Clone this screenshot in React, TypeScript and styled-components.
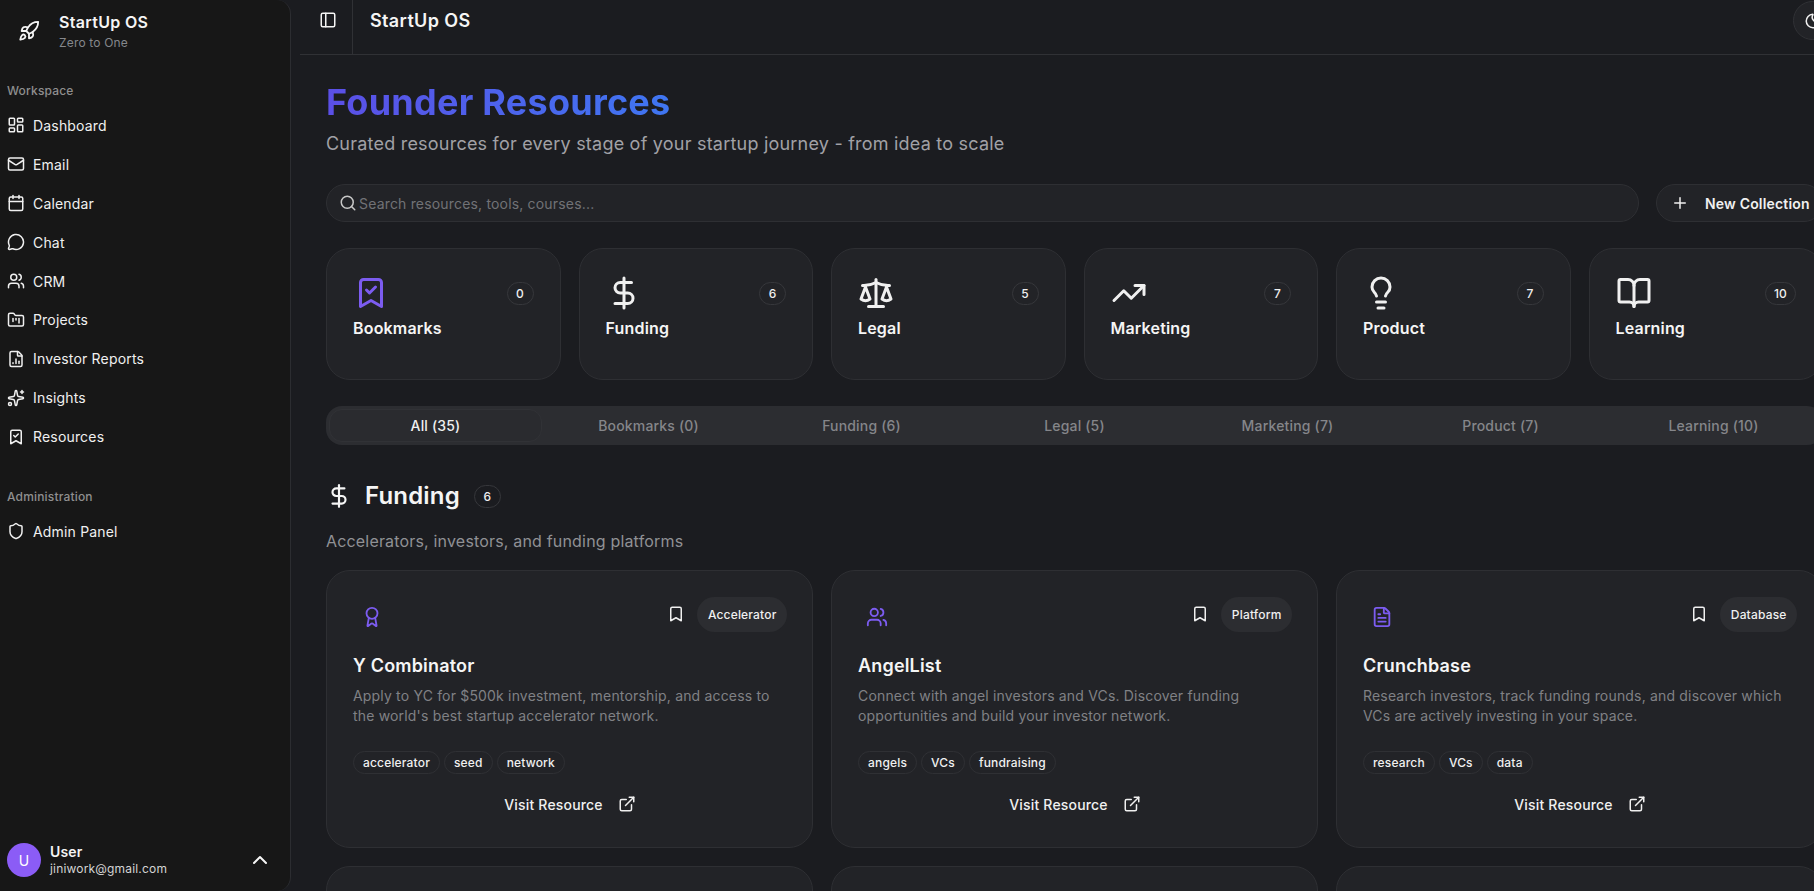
import React from "react";
import styled, { createGlobalStyle } from "styled-components";
import {
  Rocket, LayoutDashboard, Mail, Calendar, MessageCircle, Users, FolderKanban, FileChartColumn,
  Sparkles, BookmarkCheck, Shield, ChevronUp, PanelLeft, Moon, Search, Plus, DollarSign, Scale,
  TrendingUp, Lightbulb, BookOpen, Award, FileText, Bookmark, ExternalLink,
} from "lucide-react";

const Global = createGlobalStyle`
  html, body { margin: 0; padding: 0; height: 100%; overflow: hidden; background: #1b1c20; }
  body { font-family: Inter, "Liberation Sans", sans-serif; color: #f5f5f5; letter-spacing: 0.011em; }
  #root { height: 100%; }
  * { box-sizing: border-box; }
  button { letter-spacing: inherit; }
`;

const Shell = styled.div`
  display: flex;
  width: 1814px;
  height: 891px;
  overflow: hidden;
  background: #1b1c20;
`;

const Sidebar = styled.aside`
  flex: 0 0 291px;
  height: 891px;
  display: flex;
  flex-direction: column;
  background: #171717;
  border-right: 1px solid #2c2d31;
  border-radius: 0 14px 14px 0;
  padding: 0 7px;
`;

const Brand = styled.div`
  display: flex;
  align-items: center;
  height: 62px;
  gap: 19px;
  padding-left: 11px;
  flex: none;
`;

const BrandText = styled.div`
  display: flex;
  flex-direction: column;
`;

const BrandName = styled.div`
  font-size: 16px;
  line-height: 22px;
  font-weight: 600;
  letter-spacing: 0.02em;
`;

const BrandSub = styled.div`
  font-size: 12px;
  line-height: 16px;
  color: #85878c;
  margin-top: 2px;
`;

const GroupLabel = styled.div<{ $top: number }>`
  font-size: 12px;
  line-height: 16px;
  font-weight: 500;
  color: #8f8f8f;
  margin-top: ${(p) => p.$top}px;
  margin-bottom: 7px;
`;

const NavList = styled.nav`
  display: flex;
  flex-direction: column;
`;

const NavRow = styled.a`
  display: flex;
  align-items: center;
  gap: 8px;
  height: 38.9px;
  font-size: 14px;
  color: #f0f0f0;
  svg { flex: none; }
`;

const Footer = styled.div`
  margin-top: auto;
  height: 48px;
  margin-bottom: 7px;
  display: flex;
  align-items: center;
  gap: 9px;
`;

const Avatar = styled.div`
  width: 34px;
  height: 34px;
  border-radius: 50%;
  background: #8b5cf6;
  display: flex;
  align-items: center;
  justify-content: center;
  font-size: 14px;
  color: #fff;
`;

const UserText = styled.div`
  flex: 1;
  display: flex;
  flex-direction: column;
`;

const UserName = styled.div`
  font-size: 14px;
  line-height: 18px;
  font-weight: 600;
`;

const UserMail = styled.div`
  font-size: 12px;
  line-height: 16px;
  color: #d4d4d4;
`;

const ChevronSlot = styled.div`
  display: flex;
  margin-right: 11px;
`;

const Main = styled.main`
  flex: 0 0 1560px;
  margin-left: 9px;
  display: flex;
  flex-direction: column;
`;

const Header = styled.header`
  flex: none;
  height: 55px;
  display: flex;
  align-items: flex-start;
  border-bottom: 1px solid #303135;
  position: relative;
`;

const ToggleCell = styled.div`
  width: 53px;
  height: 54px;
  display: flex;
  justify-content: flex-start;
  padding: 11px 0 0 19px;
  border-right: 1px solid #303135;
`;

const HeaderTitle = styled.div`
  font-size: 18px;
  line-height: 42px;
  font-weight: 600;
  margin-left: 17px;
  letter-spacing: 0.02em;
`;

const ThemeButton = styled.button`
  position: absolute;
  left: 1493px;
  top: 1px;
  width: 39px;
  height: 39px;
  border-radius: 50%;
  border: 1px solid #303135;
  background: #222327;
  color: #f0f0f0;
  display: flex;
  align-items: center;
  justify-content: center;
  padding: 0;
`;

const Content = styled.div`
  width: 1497px;
  margin-left: 26px;
  display: flex;
  flex-direction: column;
`;

const Title = styled.h1`
  margin: 27px 0 0;
  font-size: 36px;
  line-height: 40px;
  font-weight: 700;
  letter-spacing: 0.007em;
  width: max-content;
  background: linear-gradient(90deg, #5b4fe6, #3f76f2);
  -webkit-background-clip: text;
  background-clip: text;
  color: transparent;
`;

const Subtitle = styled.p`
  margin: 8px 0 0;
  font-size: 18px;
  line-height: 28px;
  letter-spacing: 0.012em;
  color: #a1a1a6;
`;

const SearchRow = styled.div`
  display: flex;
  gap: 17px;
  margin-top: 26px;
`;

const SearchBox = styled.div`
  flex: 1;
  height: 38px;
  display: flex;
  align-items: center;
  gap: 2px;
  padding-left: 12px;
  background: #222327;
  border: 1px solid #2e2f33;
  border-radius: 19px;
  color: #c8c8c8;
`;

const Placeholder = styled.span`
  font-size: 14px;
  color: #717276;
`;

const NewButton = styled.button`
  flex: none;
  width: 167px;
  height: 38px;
  display: flex;
  align-items: center;
  gap: 16px;
  padding: 0 0 0 14px;
  background: #222327;
  border: 1px solid #2e2f33;
  border-radius: 19px;
  color: #f0f0f0;
  font: 600 14px Inter, sans-serif;
`;

const StatGrid = styled.div`
  display: grid;
  grid-template-columns: repeat(6, 1fr);
  gap: 18px;
  margin-top: 26px;
`;

const StatCard = styled.div`
  height: 132px;
  padding: 26px 26px 0;
  background: #222327;
  border: 1px solid #2e2f33;
  border-radius: 24px;
`;

const StatTop = styled.div<{ $accent?: boolean }>`
  display: flex;
  align-items: center;
  justify-content: space-between;
  color: ${(p) => (p.$accent ? "#7c5cf0" : "#f0f0f0")};
`;

const CountBadge = styled.span`
  min-width: 27px;
  height: 23px;
  padding: 0 8px;
  display: inline-flex;
  align-items: center;
  justify-content: center;
  border: 1px solid #36373b;
  border-radius: 12px;
  background: transparent;
  color: #f0f0f0;
  font-size: 12px;
  font-weight: 500;
`;

const StatName = styled.div`
  margin-top: 5px;
  font-size: 16px;
  line-height: 24px;
  font-weight: 600;
`;

const Tabs = styled.div`
  display: grid;
  grid-template-columns: repeat(7, 1fr);
  height: 39px;
  margin-top: 26px;
  padding: 3px;
  background: #2c2d31;
  border-radius: 16px;
`;

const Tab = styled.div<{ $active?: boolean }>`
  display: flex;
  align-items: center;
  justify-content: center;
  font-size: 14px;
  font-weight: 500;
  border-radius: 13px;
  color: ${(p) => (p.$active ? "#f0f0f0" : "#85868a")};
  background: ${(p) => (p.$active ? "#2a2b2f" : "transparent")};
  border: 1px solid ${(p) => (p.$active ? "#313236" : "transparent")};
`;

const SectionHead = styled.div`
  display: flex;
  align-items: center;
  margin-top: 35px;
  height: 32px;
`;

const SectionIcon = styled.span`
  display: flex;
  margin-right: 13px;
`;

const SectionTitle = styled.h2`
  margin: 0 14px 0 0;
  font-size: 24px;
  line-height: 32px;
  font-weight: 600;
`;

const SectionDesc = styled.p`
  margin: 17px 0 0;
  font-size: 16px;
  line-height: 24px;
  color: #909195;
`;

const CardGrid = styled.div`
  display: grid;
  grid-template-columns: repeat(3, 1fr);
  gap: 18px;
  margin-top: 17px;
`;

const Card = styled.article`
  height: 278px;
  padding: 26px 25px 0 26px;
  background: #222327;
  border: 1px solid #2e2f33;
  border-radius: 24px;
  display: flex;
  flex-direction: column;
`;

const CardTop = styled.div`
  display: flex;
  align-items: flex-start;
  height: 38px;
`;

const CardIcon = styled.div`
  width: 38px;
  height: 38px;
  margin-top: 1px;
  display: flex;
  align-items: center;
  justify-content: center;
  color: #7c5cf0;
`;

const MarkSlot = styled.span`
  display: flex;
  margin: 8px 12px 0 auto;
  color: #f0f0f0;
`;

const CategoryPill = styled.span`
  height: 35px;
  padding: 0 10.5px;
  display: flex;
  align-items: center;
  border-radius: 18px;
  background: #2c2d31;
  font-size: 12px;
  font-weight: 500;
  color: #f0f0f0;
`;

const CardTitle = styled.h3`
  margin: 17px 0 0;
  font-size: 18px;
  line-height: 28px;
  font-weight: 600;
`;

const CardDesc = styled.p`
  margin: 6px 0 0;
  font-size: 14px;
  line-height: 20px;
  color: #808185;
`;

const TagRow = styled.div`
  display: flex;
  gap: 4px;
  margin-top: 25px;
`;

const Tag = styled.span`
  height: 23px;
  padding: 0 9px;
  display: flex;
  align-items: center;
  border: 1px solid #2f3034;
  border-radius: 12px;
  font-size: 12px;
  font-weight: 500;
  color: #f0f0f0;
`;

const VisitLink = styled.a`
  margin-top: 18px;
  display: flex;
  align-items: center;
  justify-content: center;
  gap: 15px;
  height: 24px;
  font-size: 14px;
  font-weight: 500;
  color: #f0f0f0;
`;

const nav = [
  { label: "Dashboard", Icon: LayoutDashboard },
  { label: "Email", Icon: Mail },
  { label: "Calendar", Icon: Calendar },
  { label: "Chat", Icon: MessageCircle },
  { label: "CRM", Icon: Users },
  { label: "Projects", Icon: FolderKanban },
  { label: "Investor Reports", Icon: FileChartColumn },
  { label: "Insights", Icon: Sparkles },
  { label: "Resources", Icon: BookmarkCheck },
];

const stats = [
  { label: "Bookmarks", count: 0, Icon: BookmarkCheck, accent: true },
  { label: "Funding", count: 6, Icon: DollarSign },
  { label: "Legal", count: 5, Icon: Scale },
  { label: "Marketing", count: 7, Icon: TrendingUp },
  { label: "Product", count: 7, Icon: Lightbulb },
  { label: "Learning", count: 10, Icon: BookOpen },
];

const tabs = ["All (35)", "Bookmarks (0)", "Funding (6)", "Legal (5)", "Marketing (7)", "Product (7)", "Learning (10)"];

const cards = [
  {
    title: "Y Combinator", cat: "Accelerator", Icon: Award,
    desc: "Apply to YC for $500k investment, mentorship, and access to the world's best startup accelerator network.",
    tags: ["accelerator", "seed", "network"],
  },
  {
    title: "AngelList", cat: "Platform", Icon: Users,
    desc: "Connect with angel investors and VCs. Discover funding opportunities and build your investor network.",
    tags: ["angels", "VCs", "fundraising"],
  },
  {
    title: "Crunchbase", cat: "Database", Icon: FileText,
    desc: "Research investors, track funding rounds, and discover which VCs are actively investing in your space.",
    tags: ["research", "VCs", "data"],
  },
];

export default function App() {
  return (
    <Shell>
      <Global />
      <Sidebar>
        <Brand>
          <Rocket size={22} />
          <BrandText>
            <BrandName>StartUp OS</BrandName>
            <BrandSub>Zero to One</BrandSub>
          </BrandText>
        </Brand>
        <GroupLabel $top={21}>Workspace</GroupLabel>
        <NavList>
          {nav.map(({ label, Icon }) => (
            <NavRow key={label}>
              <Icon size={18} />
              {label}
            </NavRow>
          ))}
        </NavList>
        <GroupLabel $top={33}>Administration</GroupLabel>
        <NavList>
          <NavRow>
            <Shield size={18} />
            Admin Panel
          </NavRow>
        </NavList>
        <Footer>
          <Avatar>U</Avatar>
          <UserText>
            <UserName>User</UserName>
            <UserMail>jiniwork@gmail.com</UserMail>
          </UserText>
          <ChevronSlot>
            <ChevronUp size={24} />
          </ChevronSlot>
        </Footer>
      </Sidebar>
      <Main>
        <Header>
          <ToggleCell>
            <PanelLeft size={18} />
          </ToggleCell>
          <HeaderTitle>StartUp OS</HeaderTitle>
          <ThemeButton>
            <Moon size={18} />
          </ThemeButton>
        </Header>
        <Content>
          <Title>Founder Resources</Title>
          <Subtitle>Curated resources for every stage of your startup journey - from idea to scale</Subtitle>
          <SearchRow>
            <SearchBox>
              <Search size={18} />
              <Placeholder>Search resources, tools, courses...</Placeholder>
            </SearchBox>
            <NewButton>
              <Plus size={18} />
              New Collection
            </NewButton>
          </SearchRow>
          <StatGrid>
            {stats.map(({ label, count, Icon, accent }) => (
              <StatCard key={label}>
                <StatTop $accent={accent}>
                  <Icon size={36} />
                  <CountBadge>{count}</CountBadge>
                </StatTop>
                <StatName>{label}</StatName>
              </StatCard>
            ))}
          </StatGrid>
          <Tabs>
            {tabs.map((t, i) => (
              <Tab key={t} $active={i === 0}>{t}</Tab>
            ))}
          </Tabs>
          <SectionHead>
            <SectionIcon>
              <DollarSign size={26} />
            </SectionIcon>
            <SectionTitle>Funding</SectionTitle>
            <CountBadge>6</CountBadge>
          </SectionHead>
          <SectionDesc>Accelerators, investors, and funding platforms</SectionDesc>
          <CardGrid>
            {cards.map(({ title, cat, Icon, desc, tags }) => (
              <Card key={title}>
                <CardTop>
                  <CardIcon>
                    <Icon size={22} />
                  </CardIcon>
                  <MarkSlot>
                    <Bookmark size={18} />
                  </MarkSlot>
                  <CategoryPill>{cat}</CategoryPill>
                </CardTop>
                <CardTitle>{title}</CardTitle>
                <CardDesc>{desc}</CardDesc>
                <TagRow>
                  {tags.map((t) => (
                    <Tag key={t}>{t}</Tag>
                  ))}
                </TagRow>
                <VisitLink>
                  Visit Resource
                  <ExternalLink size={18} />
                </VisitLink>
              </Card>
            ))}
            <Card />
            <Card />
            <Card />
          </CardGrid>
        </Content>
      </Main>
    </Shell>
  );
}
